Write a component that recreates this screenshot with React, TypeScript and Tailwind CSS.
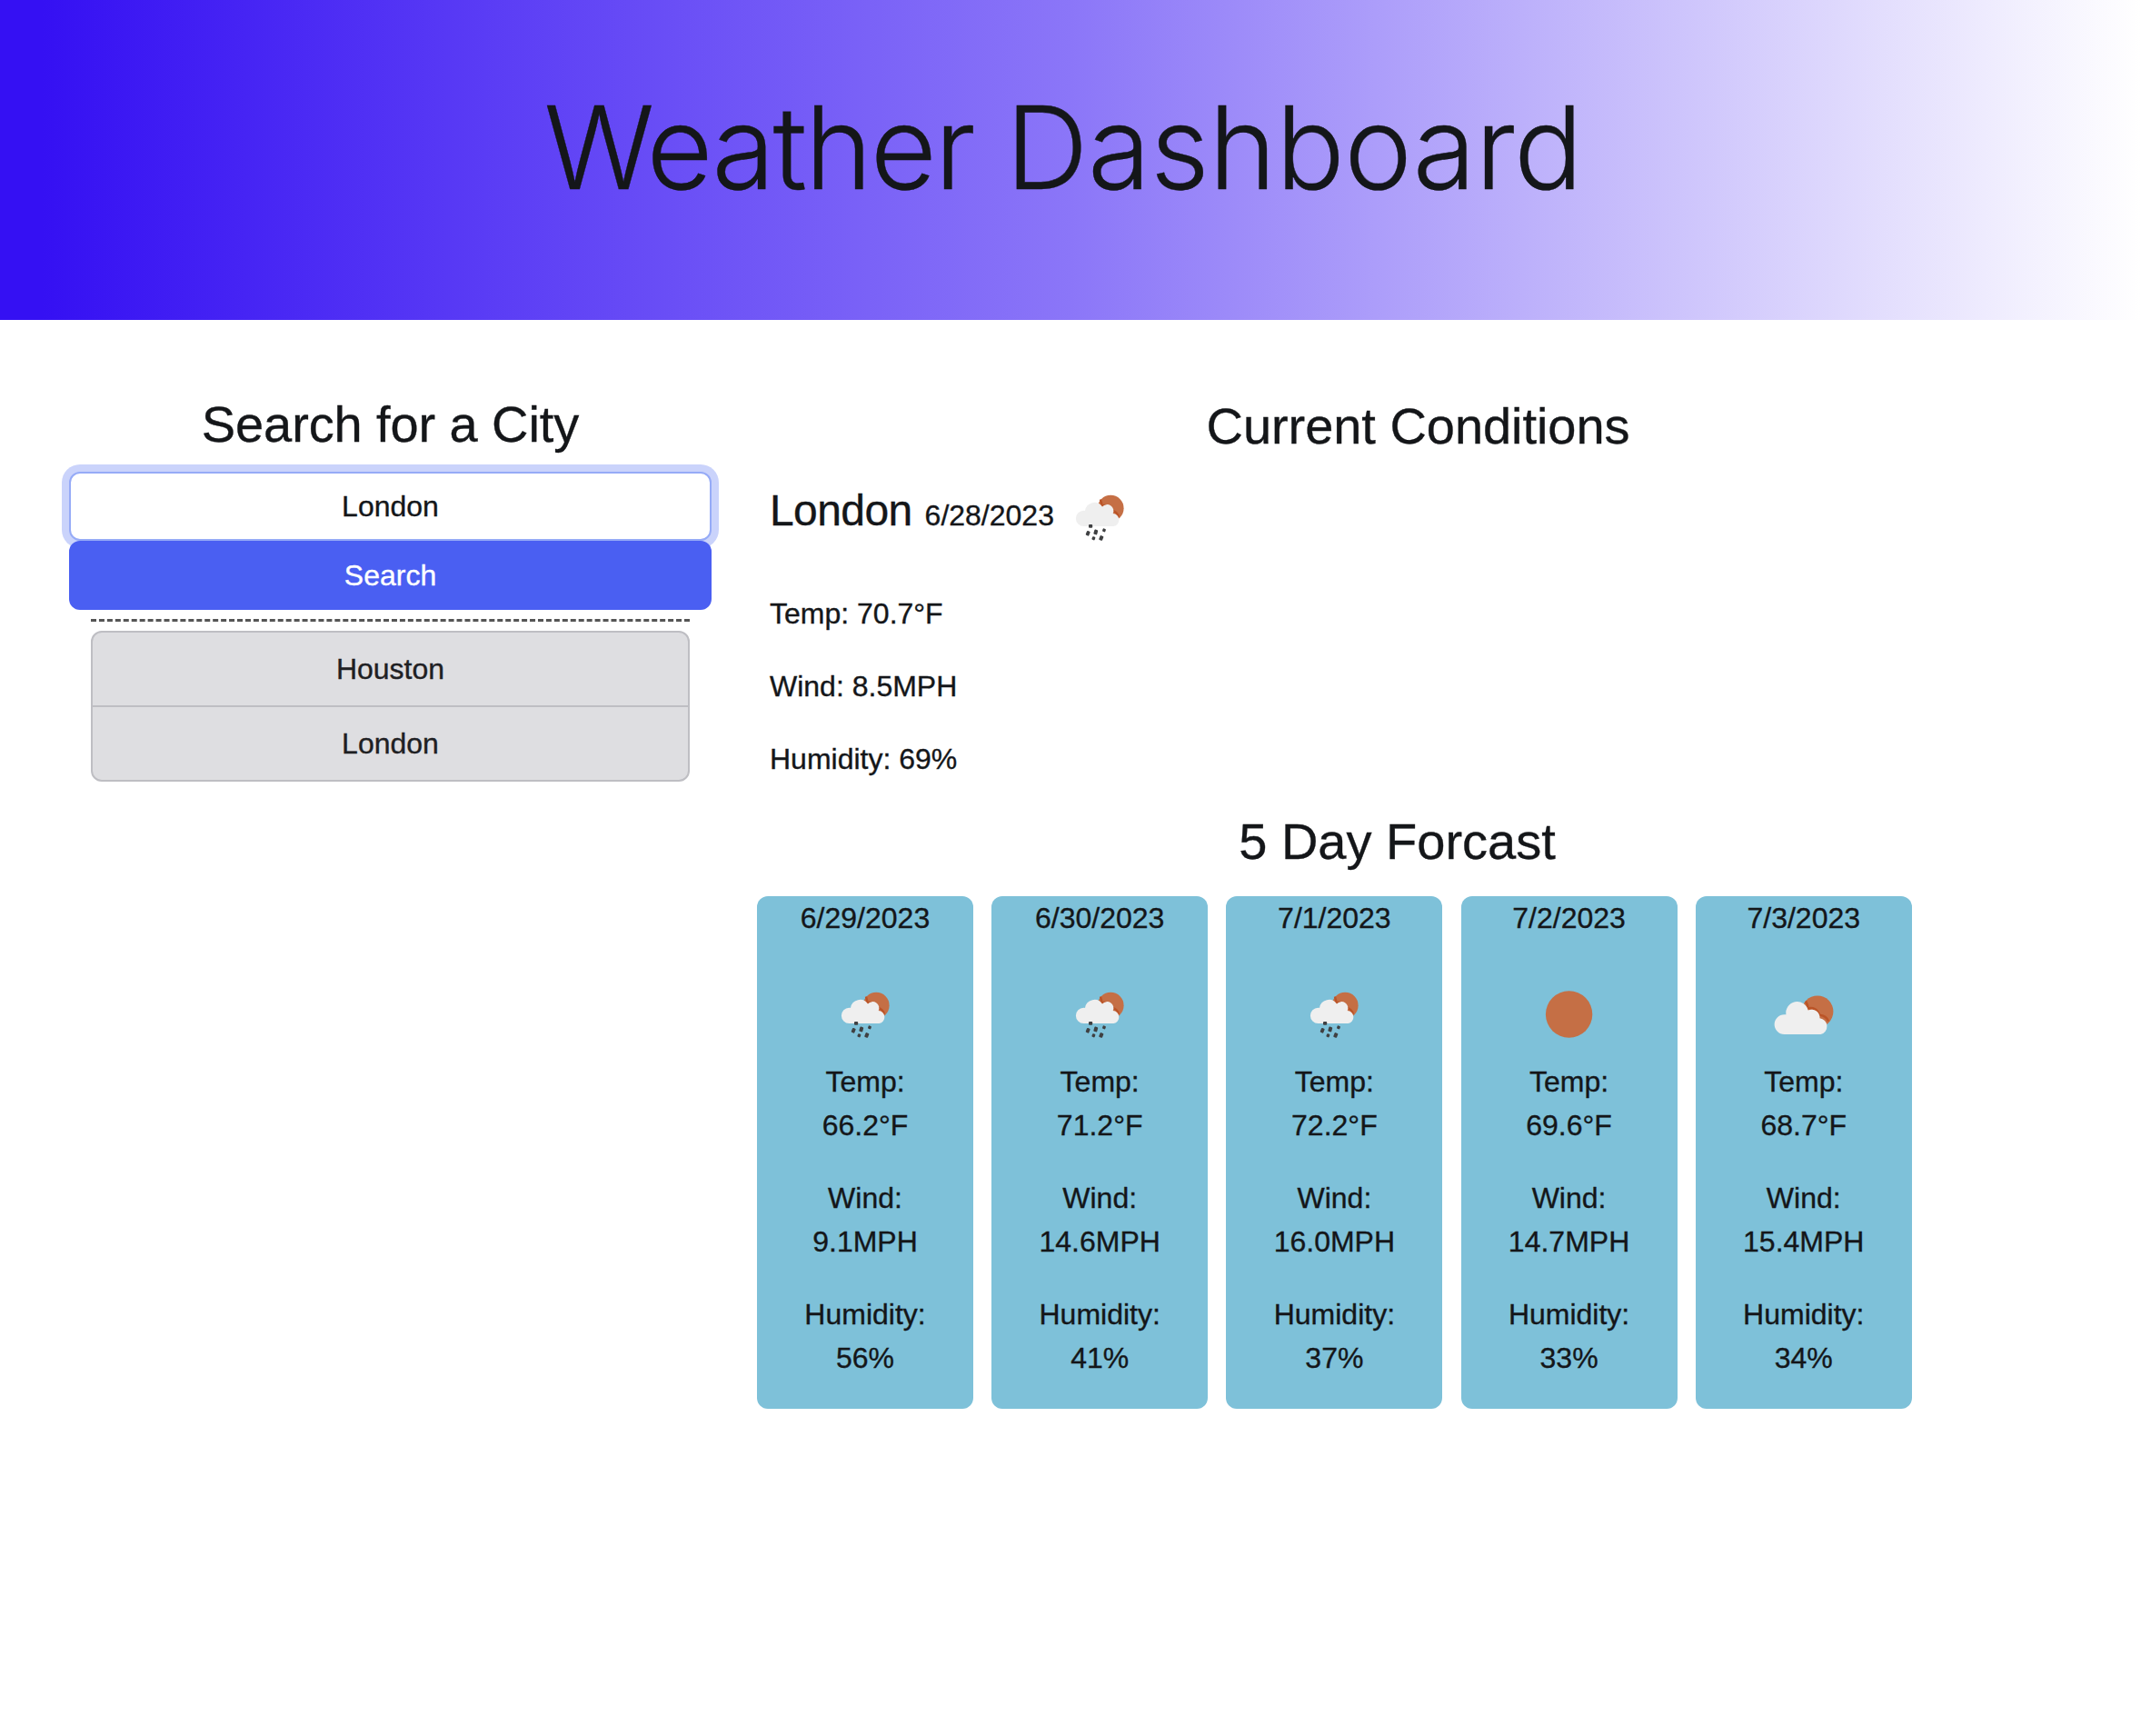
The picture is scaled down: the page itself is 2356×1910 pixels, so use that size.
import React from "react";

type IconKind = "rain" | "clear" | "clouds";

function WeatherIcon({ kind }: { kind: IconKind }) {
  return (
    <svg viewBox="0 0 100 100" className="block size-[100px] shrink-0 blur-[0.6px]" aria-hidden="true">
      {kind === "clear" && <circle cx="49.6" cy="50" r="25.7" fill="#c56f45" />}
      {kind === "rain" && (
        <>
          <circle cx="62.2" cy="40.2" r="14.4" fill="#c56f45" />
          <path
            d="M51 30.5c.8 2.600 1.500 5.500 1.500 7.200 3.500-1.600 8.500-.5 10.800 5.300 3.500.4 6.700 2.500 7.500 7"
            fill="none"
            stroke="#bb5427"
            strokeWidth="2.400"
          />
          <path
            d="M32.500 60a8.600 8.600 0 0 1 0-17.200c.5 0 1 0 1.500.1a10.400 10.400 0 0 1 19-4.300 7 7 0 0 1 11.700 7.500 7 7 0 0 1 .8 13.900z"
            fill="#efefef"
          />
          <g fill="#3f4042">
            <rect x="38" y="58" width="4.200" height="3.800" rx="1" />
            <rect x="35.300" y="65.100" width="3.800" height="5.200" rx="1" transform="rotate(22 37 67.700)" />
            <rect x="43.800" y="63.800" width="4" height="5.400" rx="1" transform="rotate(16 46 66.500)" />
            <rect x="53.300" y="62.600" width="3.400" height="3.600" rx="1" transform="rotate(20 55 64.300)" />
            <rect x="41.800" y="71.400" width="3.400" height="3.800" rx="1" transform="rotate(20 43.500 73)" />
            <rect x="49.800" y="70.400" width="4" height="5.200" rx="1" transform="rotate(22 52 73)" />
          </g>
        </>
      )}
      {kind === "clouds" && (
        <>
          <circle cx="65" cy="46.900" r="17.400" fill="#c56f45" />
          <path
            d="M52 35.500c1.500 2.500 2.300 5.500 2.700 8 5-1.600 10.300 1.200 12.300 7.200 4.500.2 8.500 2.500 10 7"
            fill="none"
            stroke="#bb5427"
            strokeWidth="2.600"
          />
          <path
            d="M28.500 72a10.900 10.900 0 0 1 0-21.800c.7 0 1.300 0 1.900.1a12.400 12.400 0 0 1 24.300-4.800 9 9 0 0 1 12.800 8.800 9 9 0 0 1 1 17.700z"
            fill="#efefef"
          />
        </>
      )}
    </svg>
  );
}

const history = ["Houston", "London"];

const forecast: { date: string; icon: IconKind; temp: string; wind: string; humidity: string }[] = [
  { date: "6/29/2023", icon: "rain", temp: "66.2", wind: "9.1", humidity: "56" },
  { date: "6/30/2023", icon: "rain", temp: "71.2", wind: "14.6", humidity: "41" },
  { date: "7/1/2023", icon: "rain", temp: "72.2", wind: "16.0", humidity: "37" },
  { date: "7/2/2023", icon: "clear", temp: "69.6", wind: "14.7", humidity: "33" },
  { date: "7/3/2023", icon: "clouds", temp: "68.7", wind: "15.4", humidity: "34" },
];

function SearchPanel() {
  return (
    <section className="ml-[76px] mt-[81px] w-[707px] text-center">
      <h2 className="mb-[19px] text-[56px] leading-[67px] tracking-[-0.1px]">Search for a City</h2>
      <form className="flex flex-col" onSubmit={(e) => e.preventDefault()}>
        <input
          type="text"
          defaultValue="London"
          className="h-[76px] rounded-xl border-2 border-[#96abf7] bg-white px-6 text-center text-[32px] leading-[48px] shadow-[0_0_0_8px_#cad3fb] outline-none"
        />
        <button className="z-10 h-[76px] rounded-xl bg-[#4a5ff2] text-[32px] leading-[48px] text-white">Search</button>
      </form>
      <hr className="mx-6 my-[10px] border-t-[3px] border-dashed border-[#555555]" />
      <ul className="mx-6 divide-y-2 divide-[#bebec3] rounded-xl border-2 border-[#bebec3] bg-[#dedee1] text-[#1e2023]">
        {history.map((city) => (
          <li key={city} className="py-4">
            {city}
          </li>
        ))}
      </ul>
    </section>
  );
}

function CurrentConditions() {
  return (
    <div className="w-[1455px]">
      <h2 className="text-center text-[56px] leading-[67px] tracking-[-0.05px]">Current Conditions</h2>
      <div className="mt-[17px] pl-[14px]">
        <div className="flex h-[100px]">
          <div className="flex w-[313px] items-baseline gap-[14px] pt-[14px]">
            <h3 className="text-[48px] leading-[58px] tracking-[-0.6px]">London</h3>
            <span>6/28/2023</span>
          </div>
          <WeatherIcon kind="rain" />
        </div>
        <div className="mt-8 flex flex-col gap-8">
          <p>Temp: 70.7°F</p>
          <p>Wind: 8.5MPH</p>
          <p>Humidity: 69%</p>
        </div>
      </div>
    </div>
  );
}

function Forecast() {
  return (
    <div className="mt-[33px]">
      <h2 className="w-[1409px] text-center text-[56px] leading-[67px]">5 Day Forcast</h2>
      <div className="mt-[27px] flex gap-[20.2px]">
        {forecast.map((day) => (
          <article key={day.date} className="flex w-[238px] flex-col items-center rounded-xl bg-[#7ec1d9] pb-8 text-center">
            <h4 className="mb-8">{day.date}</h4>
            <WeatherIcon kind={day.icon} />
            <div className="flex flex-col gap-8">
              <p>
                Temp:
                <br />
                {day.temp}°F
              </p>
              <p>
                Wind:
                <br />
                {day.wind}MPH
              </p>
              <p>
                Humidity:
                <br />
                {day.humidity}%
              </p>
            </div>
          </article>
        ))}
      </div>
    </div>
  );
}

export default function App() {
  return (
    <div className="min-h-[1910px] w-[2356px] bg-white font-['Liberation_Sans',Arial,sans-serif] text-[32px] leading-[48px] text-[#141619] [-webkit-text-stroke:0.35px]">
      <header className="h-[352px] bg-[linear-gradient(90deg,#3510f3_2%,#8b76f8_50%,#ffffff_100%)] pt-[86px] pr-4">
        <h1 className="text-center font-['Inter','Liberation_Sans',sans-serif] text-[126px] leading-[152px] font-light">
          <span className="tracking-[-2.3px]">Weather</span> <span className="tracking-[-0.5px]">Dashboard</span>
        </h1>
      </header>
      <main className="flex">
        <SearchPanel />
        <section className="ml-[50px] mt-[83px]">
          <CurrentConditions />
          <Forecast />
        </section>
      </main>
    </div>
  );
}
